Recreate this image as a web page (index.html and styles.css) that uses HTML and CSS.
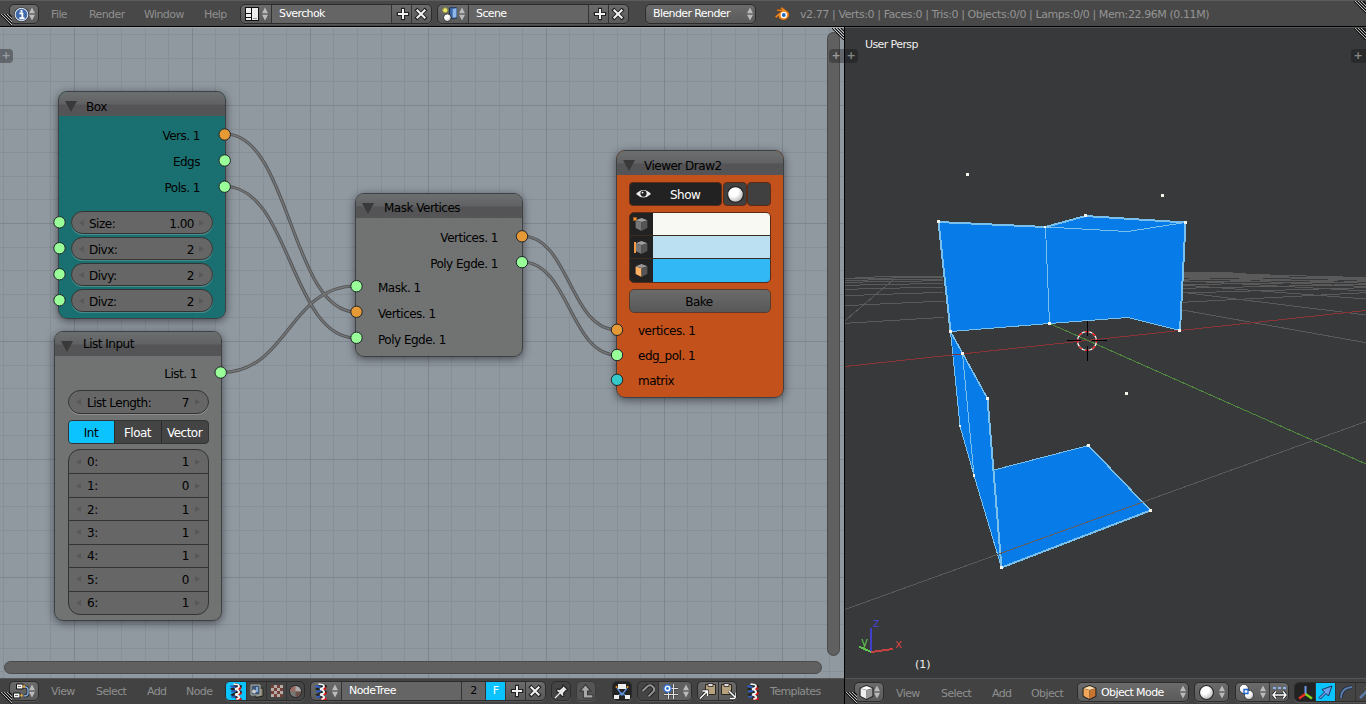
FILE: index.html
```html
<!DOCTYPE html>
<html lang="en">
<head>
<meta charset="utf-8">
<title>Sverchok</title>
<link rel="stylesheet" href="styles.css">
</head>
<body>
<svg width="0" height="0" class="defs">
  <defs>
    <radialGradient id="ball" cx=".35" cy=".3" r=".8"><stop offset=".4" stop-color="#fff"/><stop offset="1" stop-color="#aaa"/></radialGradient>
    <symbol id="i-updown" viewBox="0 0 6 14"><path d="M3 .5L6 6.200H0zM3 13.500L6 7.800H0z" fill="#bababa"/></symbol>
    <symbol id="i-plus" viewBox="0 0 14 14"><path d="M7 .8v12.400M.8 7h12.400" stroke="#222" stroke-width="4"/><path d="M7 2v10M2 7h10" stroke="#f2f2f2" stroke-width="2"/></symbol>
    <symbol id="i-x" viewBox="0 0 14 14"><path d="M1.800 1.800l10.400 10.400M12.200 1.800L1.800 12.200" stroke="#222" stroke-width="4"/><path d="M2.700 2.700l8.600 8.600M11.300 2.700l-8.600 8.600" stroke="#f2f2f2" stroke-width="2"/></symbol>
    <symbol id="i-info" viewBox="0 0 14 14"><circle cx="7" cy="7" r="6.800" fill="#1d2430"/><circle cx="7" cy="7" r="5.900" fill="#3f69ab" stroke="#dfe5ee" stroke-width="1"/><path d="M5 6h2.800v4.300M5 10.500h4.800M7 2.800v2" stroke="#fff" stroke-width="1.700" fill="none"/></symbol>
    <symbol id="i-layout" viewBox="0 0 14 14"><path d="M0 0h14v14H0z" fill="#111"/><path d="M1 1h5v5H1zM7 1h6v12H7zM1 7h5v3H1zM1 11h5v2H1z" fill="#eee"/><path d="M8 11h4v1H8z" fill="#999"/></symbol>
    <symbol id="i-scene" viewBox="0 0 14 14"><path d="M7 1l3-1 4 1v9l-4 1-3-1z" fill="#3a68a8" stroke="#16243a" stroke-width=".7"/><path d="M10 2l3.500-1v8.600L10 10z" fill="#8fb8ea"/><circle cx="5" cy="10" r="3.600" fill="url(#ball)" stroke="#222" stroke-width=".8"/><circle cx="3" cy="3" r="2.400" fill="#e7e36b" stroke="#8b8738" stroke-width=".8"/></symbol>
    <symbol id="i-helix" viewBox="0 0 12 17"><path d="M4 1.200L9 3.500 4 6l5 3-5 3 5 3.500" fill="none" stroke="#222" stroke-width="4"/><path d="M.5 3l5 1.500M1 8.500l5-.5M1.500 14l4-.5" stroke="#2c5fc0" stroke-width="2.200"/><path d="M7 12l4.500-2M6 16h5.500M8 6l3-1" stroke="#d41010" stroke-width="2.400"/><path d="M3.500 1.200q5.500 0 5.500 2T5 6q3 .5 4 2.500T5 11.500q3 .5 4 2.300T6.500 16" fill="none" stroke="#f2f2f2" stroke-width="1.800"/></symbol>
    <symbol id="i-cube" viewBox="0 0 14 14"><path d="M1 3l6-2.500L13 3v7.500L7 13.500 1 10.500z" fill="#222" stroke="#222" stroke-width="1"/><path d="M1.500 3.300L7 5v8L1.500 10.200z" fill="var(--l)"/><path d="M12.500 3.300L7 5v8l5.500-2.800z" fill="var(--r)"/><path d="M1.500 3L7 1l5.500 2L7 4.600z" fill="var(--t)"/></symbol>
    <symbol id="i-ball" viewBox="0 0 14 14"><circle cx="7" cy="7" r="6.500" fill="url(#ball)" stroke="#222" stroke-width="1"/></symbol>
    <symbol id="i-grip" viewBox="0 0 12 12"><path d="M0 0l12 12M3 0l9 9M6 0l6 6M9 0l3 3" stroke="#111" stroke-width="1.200"/><path d="M1 0l11 11M4 0l8 8M7 0l5 5" stroke="#ddd" stroke-width=".8"/></symbol>
    <symbol id="i-al" viewBox="0 0 5 6"><path d="M5 0v6L0 3z" fill="#585858"/></symbol>
    <symbol id="i-ar" viewBox="0 0 5 6"><path d="M0 0v6l5-3z" fill="#585858"/></symbol>
    <symbol id="i-clip" viewBox="0 0 11 12"><path d="M.5 1.500h10v10H.5z" fill="#b6a27f" stroke="#2a2620"/><path d="M3 .5h5v3H3z" fill="#ddd" stroke="#2a2620" stroke-width=".8"/></symbol>
  </defs>
</svg>

<div class="app">
  <header class="bar top">
    <svg class="grip bl"><use href="#i-grip"/></svg>
    <div class="group ed-switch"><svg class="ic15"><use href="#i-info"/></svg><svg class="ud"><use href="#i-updown"/></svg></div>
    <nav class="menu menu-main"><span>File</span><span>Render</span><span>Window</span><span>Help</span></nav>
    <div class="group id-block">
      <span class="cell pick"><svg class="ic14"><use href="#i-layout"/></svg><svg class="ud"><use href="#i-updown"/></svg></span><span class="cell name">Sverchok</span><span class="cell sq"><svg class="ic13"><use href="#i-plus"/></svg></span><span class="cell sq"><svg class="ic14 cross"><use href="#i-x"/></svg></span>
    </div>
    <div class="group id-block scene">
      <span class="cell pick"><svg class="ic15"><use href="#i-scene"/></svg><svg class="ud"><use href="#i-updown"/></svg></span><span class="cell name">Scene</span><span class="cell sq"><svg class="ic13"><use href="#i-plus"/></svg></span><span class="cell sq"><svg class="ic14 cross"><use href="#i-x"/></svg></span>
    </div>
    <div class="group engine"><span>Blender Render</span><svg class="ud"><use href="#i-updown"/></svg></div>
    <svg class="logo" viewBox="0 0 16 14"><path d="M1 9.500L7.500 4H3V2.500h5L6.500 1 8 .3l6 4.500c3 3-.5 8.200-4.500 8.200-3 0-5-2-5-4.200L2.500 11z" fill="#f08a24" stroke="#9a4a08" stroke-width=".5"/><circle cx="9.800" cy="8" r="3.200" fill="#fff"/><circle cx="9.800" cy="8" r="1.900" fill="#2868b8"/></svg>
    <span class="stats">v2.77 | Verts:0 | Faces:0 | Tris:0 | Objects:0/0 | Lamps:0/0 | Mem:22.96M (0.11M)</span>
    <svg class="grip tr"><use href="#i-grip"/></svg>
  </header>

  <section class="left">
    <div class="canvas">
      <svg class="wires" width="844" height="651" viewBox="0 27 844 651">
        <g class="w-out"><path id="w1" d="M225 134C290 134 291 312 356 312"/><path id="w2" d="M225 186.500C290 186.500 291 338 356 338"/><path id="w3" d="M221 372.500C288 372.500 289 286 356 286"/><path id="w4" d="M522 236C569 236 570 330 617 330"/><path id="w5" d="M522 262C569 262 570 355 617 355"/></g>
        <g class="w-in"><use href="#w1"/><use href="#w2"/><use href="#w3"/><use href="#w4"/><use href="#w5"/></g>
      </svg>

      <article class="node box">
        <h2><i></i>Box</h2>
        <div class="outs"><p>Vers. 1</p><p>Edgs</p><p>Pols. 1</p></div>
        <div class="fields">
          <div class="num"><svg><use href="#i-al"/></svg><b>Size:</b><span>1.00</span><svg><use href="#i-ar"/></svg></div>
          <div class="num"><svg><use href="#i-al"/></svg><b>Divx:</b><span>2</span><svg><use href="#i-ar"/></svg></div>
          <div class="num"><svg><use href="#i-al"/></svg><b>Divy:</b><span>2</span><svg><use href="#i-ar"/></svg></div>
          <div class="num"><svg><use href="#i-al"/></svg><b>Divz:</b><span>2</span><svg><use href="#i-ar"/></svg></div>
        </div>
      </article>

      <article class="node list">
        <h2><i></i>List Input</h2>
        <div class="outs"><p>List. 1</p></div>
        <div class="num"><svg><use href="#i-al"/></svg><b>List Length:</b><span>7</span><svg><use href="#i-ar"/></svg></div>
        <div class="tabs"><span class="on">Int</span><span>Float</span><span>Vector</span></div>
        <div class="stack">
          <div class="row"><svg><use href="#i-al"/></svg><b>0:</b><span>1</span><svg><use href="#i-ar"/></svg></div>
          <div class="row"><svg><use href="#i-al"/></svg><b>1:</b><span>0</span><svg><use href="#i-ar"/></svg></div>
          <div class="row"><svg><use href="#i-al"/></svg><b>2:</b><span>1</span><svg><use href="#i-ar"/></svg></div>
          <div class="row"><svg><use href="#i-al"/></svg><b>3:</b><span>1</span><svg><use href="#i-ar"/></svg></div>
          <div class="row"><svg><use href="#i-al"/></svg><b>4:</b><span>1</span><svg><use href="#i-ar"/></svg></div>
          <div class="row"><svg><use href="#i-al"/></svg><b>5:</b><span>0</span><svg><use href="#i-ar"/></svg></div>
          <div class="row"><svg><use href="#i-al"/></svg><b>6:</b><span>1</span><svg><use href="#i-ar"/></svg></div>
        </div>
      </article>

      <article class="node mask">
        <h2><i></i>Mask Vertices</h2>
        <div class="outs"><p>Vertices. 1</p><p>Poly Egde. 1</p></div>
        <div class="ins"><p>Mask. 1</p><p>Vertices. 1</p><p>Poly Egde. 1</p></div>
      </article>

      <article class="node viewer">
        <h2><i></i>Viewer Draw2</h2>
        <div class="show-row">
          <span class="show"><svg viewBox="0 0 16 10"><path d="M0 5Q8-3.500 16 5 8 12.500 0 5z" fill="#eee"/><circle cx="8" cy="4.500" r="3.300" fill="#222"/><circle cx="7" cy="3.500" r="1" fill="#fff"/></svg><em>Show</em></span>
          <span class="tog"><svg class="ic18"><use href="#i-ball"/></svg></span><span class="tog"></span>
        </div>
        <div class="colors">
          <div class="crow"><span><svg class="ic15 dark"><use href="#i-cube"/></svg><i class="mk vert"></i></span><u class="c1"></u></div>
          <div class="crow"><span><svg class="ic15 dark"><use href="#i-cube"/></svg><i class="mk edge"></i></span><u class="c2"></u></div>
          <div class="crow"><span><svg class="ic15 face"><use href="#i-cube"/></svg></span><u class="c3"></u></div>
        </div>
        <div class="bake">Bake</div>
        <div class="ins"><p>vertices. 1</p><p>edg_pol. 1</p><p>matrix</p></div>
      </article>

      <svg class="sockets" width="844" height="651" viewBox="0 27 844 651">
        <g fill="#e69a36"><circle cx="224.700" cy="134.500" r="5.700"/><circle cx="522" cy="236.300" r="5.700"/><circle cx="356.500" cy="311.800" r="5.700"/><circle cx="617" cy="329.800" r="5.700"/></g>
        <g fill="#99ff99"><circle cx="224.700" cy="160.500" r="5.700"/><circle cx="224.700" cy="186.700" r="5.700"/><circle cx="59.500" cy="222.300" r="5.700"/><circle cx="59.500" cy="248.200" r="5.700"/><circle cx="59.500" cy="274.200" r="5.700"/><circle cx="59.500" cy="300.200" r="5.700"/><circle cx="220.700" cy="372.500" r="5.700"/><circle cx="522" cy="262.200" r="5.700"/><circle cx="356.500" cy="286.200" r="5.700"/><circle cx="356.500" cy="337.800" r="5.700"/><circle cx="617" cy="355" r="5.700"/></g>
        <circle cx="617" cy="379.800" r="5.700" fill="#35caca"/>
      </svg>
      <div class="vscroll"></div><div class="hscroll"></div>
      <span class="tab tl">+</span><span class="tab trt">+</span>
      <svg class="grip tr"><use href="#i-grip"/></svg>
    </div>

    <footer class="bar bottom">
      <svg class="grip bl"><use href="#i-grip"/></svg>
      <div class="group ed-switch nodes"><svg width="16" height="16" viewBox="0 0 16 16"><path d="M10 4h2.500q2.500 0 2.500 3v3q0 3-4 3" fill="none" stroke="#222" stroke-width="3"/><path d="M10 4h2.500q2.500 0 2.500 3v3q0 3-4 3" fill="none" stroke="#7fa8dc" stroke-width="1.500"/><path d="M3.500 1h6.500v5H3.500zM.5 10H7v5H.5z" fill="#f2f2f2" stroke="#151515"/><path d="M5 3.500h3M2 12.500h3" stroke="#777"/><circle cx="11" cy="3.500" r="1.200" fill="#f0b030"/><circle cx="8.500" cy="12.500" r="1.200" fill="#f0b030"/></svg><svg class="ud"><use href="#i-updown"/></svg></div>
      <nav class="menu menu-node"><span>View</span><span>Select</span><span>Add</span><span>Node</span></nav>
      <div class="group dark types">
        <span class="cell sq on"><svg class="helix"><use href="#i-helix"/></svg></span>
        <span class="cell sq"><svg width="14" height="14" viewBox="0 0 14 14"><path d="M5 5l8-1v8l-7 1.500z" fill="#8d8a7b" stroke="#24241f"/><path d="M1 1h9v10H1z" fill="#405878" stroke="#b5b5a5"/><circle cx="4" cy="7.500" r="2" fill="#ccc"/><path d="M6 3h2v5H6z" fill="#85a9d8"/></svg></span>
        <span class="cell sq"><svg width="12" height="12" viewBox="0 0 12 12"><path d="M0 0h12v12H0z" fill="#b4aca5"/><path d="M0 0h3v3H0zM6 0h3v3H6zM3 3h3v3H3zM9 3h3v3H9zM0 6h3v3H0zM6 6h3v3H6zM3 9h3v3H3zM9 9h3v3H9z" fill="#75403c"/></svg></span>
        <span class="cell sq last"><svg width="13" height="13" viewBox="0 0 13 13"><circle cx="6.500" cy="6.500" r="6" fill="#777" stroke="#222"/><path d="M6.500 1A5.500 5.500 0 0 0 1 6.500h5.500z" fill="#9b6a62"/><path d="M6.500 1A5.500 5.500 0 0 1 12 6.500H6.500z" fill="#aaa"/><path d="M6.500 12A5.500 5.500 0 0 0 12 6.500H6.500z" fill="#705149"/></svg></span>
      </div>
      <div class="group tree">
        <span class="cell pick"><svg class="helix"><use href="#i-helix"/></svg><svg class="ud"><use href="#i-updown"/></svg></span><span class="cell name">NodeTree</span><span class="cell users">2</span><span class="cell sq on">F</span><span class="cell sq"><svg class="ic13"><use href="#i-plus"/></svg></span><span class="cell sq"><svg class="ic14 cross"><use href="#i-x"/></svg></span>
      </div>
      <div class="group dark one"><svg width="15" height="15" viewBox="0 0 15 15"><path d="M1 14l5-5M9 1l5 5-2 .5-2.500 3 .5 2.500-2 .5L2.500 7 3 5l2.500.5 3-2.500z" stroke="#222" stroke-width="1.200" fill="#e6e6e6"/><path d="M1 14l5.500-5.500" stroke="#eee" stroke-width="1.200"/></svg></div>
      <div class="group one dim"><svg width="15" height="15" viewBox="0 0 14 14"><path d="M6 .5L1 6.500h3V12q0 1 1 1h8v-3H8V6.500h3z" fill="#a8a8a8" stroke="#333"/></svg></div>
      <div class="group black one auto"><svg width="16" height="15" viewBox="0 0 16 15"><path d="M3 4l5 7 5-7M4 12l4-3 4 3" fill="none" stroke="#5d8ad0" stroke-width="1.400"/><path d="M4 0h8v5H4zM0 11h5v4H0zM11 11h5v4h-5z" fill="#eee"/><circle cx="2.500" cy="3" r="1" fill="#f0a020"/><circle cx="13.500" cy="3" r="1" fill="#f0a020"/></svg></div>
      <div class="group dark snap"><span class="cell sq"><svg width="14" height="14" viewBox="0 0 13 13"><path d="M1.500 6.500l4-4Q8.500 0 11 2.500t0 5l-4 4" fill="none" stroke="#222" stroke-width="3.600"/><path d="M1.500 6.500l4-4Q8.500 0 11 2.500t0 5l-4 4" fill="none" stroke="#949494" stroke-width="1.800"/></svg></span><span class="cell grid"><svg width="15" height="15" viewBox="0 0 15 15"><path d="M5.500 4v11M10.500 0v15M1 10.500h14M4 4.500h11" stroke="#333" stroke-width="2.200"/><path d="M5.500 4v11M10.500 0v15M1 10.500h14M4 4.500h11" stroke="#e4e4e4" stroke-width="1.200"/><circle cx="4.500" cy="4.500" r="3.600" fill="#fff" stroke="#2d6fd2" stroke-width="1.300"/><circle cx="4.500" cy="4.500" r="1.400" fill="#2d6fd2"/></svg><svg class="ud"><use href="#i-updown"/></svg></span></div>
      <div class="group clip"><span class="cell sq"><svg width="18" height="17" viewBox="0 0 18 17"><use href="#i-clip" x="6" y="0" width="11" height="12"/><path d="M1 15.500l7-7M3.500 8H8.500v5" fill="none" stroke="#222" stroke-width="3"/><path d="M1 15.500l7-7M3.500 8H8.500v5" fill="none" stroke="#fff" stroke-width="1.500"/></svg></span><span class="cell sq"><svg width="18" height="17" viewBox="0 0 18 17"><use href="#i-clip" x="1" y="0" width="11" height="12"/><path d="M9 8l6.500 6.500M16 9.500V15.500H10" fill="none" stroke="#222" stroke-width="3"/><path d="M9 8l6.500 6.500M16 9.500V15.500H10" fill="none" stroke="#fff" stroke-width="1.500"/></svg></span></div>
      <svg class="helix tmpl-ic"><use href="#i-helix"/></svg>
      <nav class="menu tmpl"><span>Templates</span></nav>
    </footer>
  </section>

  <section class="right">
    <div class="view3d">
      <svg width="521" height="651" viewBox="845 27 521 651" shape-rendering="crispEdges">
        <g class="floor" transform="translate(840 160) scale(.3354 .3333)">
          <path d="M15 490L310 472M15 437L313 423M15 407L308 397M15 388L308 381M15 376L308 370M15 367L308 362M15 361L308 357M15 356L308 352M45 352L225 349H308M15 482L165 354"/>
          <path d="M1020 450L1568 548M1020 397L1568 465M1020 375L1568 417M1020 362L1568 393M1020 353L1568 380M1020 347L1568 370M1020 342L1568 361M1028 338L1568 353"/>
          <path d="M1020 427L1568 398M1020 399L1568 383M1020 385L1568 373M1020 374L1568 365M1020 366L1568 359M1020 360L1568 355M1020 354L1568 352"/>
          <path d="M1028 337H1145L1250 345 1340 350 1028 353z" class="dense"/>
        </g>
        <g fill="#077ce8">
          <path d="M938.500 222L1045.500 227 1085.500 216 1185.500 222.500 1180 330.500 1128 317.500 1049.500 323.500 950.500 331.500z"/>
          <path d="M950.500 331.500L962.500 353.500 987.500 398.500 994 470 1088.500 445.500 1150.500 510.500 1001.500 567.500 974 475.500 960 426z"/>
        </g>
        <g fill="none" stroke="#79c1ec">
          <path d="M1045.500 227L1127.500 231.500 1185.500 222.500M1045.500 227L1049.500 323.500M950.500 331.500L1049.500 323.500 1128 317.500 1180 330.500M950.500 331.500L960 426 974 475.500 1001.500 567.500M962.500 353.500L974 475.500M994 470L1088.500 445.500"/>
          <path stroke-width="2" d="M950.500 331.500L938.500 222 1045.500 227 1085.500 216 1185.500 222.500 1180 330.500M987.500 398.500L1001.500 567.500 1150.500 510.500"/>
          <path stroke-width="1.500" d="M950.500 331.500L987.500 398.500M1088.500 445.500L1150.500 510.500"/>
        </g>
        <path d="M845 366.500L1366 310.500" stroke="#8a3438"/>
        <path d="M1049.500 323.500L1366 464" stroke="#4f8a3d"/>
        <path d="M845 609.500L1366 421.500" stroke="#5a5a5a"/>
        <path d="M1002 552.900L1143 502" stroke="#5f5d62"/>
        <g fill="#f4f4ec">
          <path d="M966 173h3v3h-3zM1161 194h3v3h-3zM1125 392h3v3h-3zM937 220h3v3h-3zM1044 226h2v2h-2zM1084 214h3v3h-3zM1184 221h3v3h-3zM1178 329h3v3h-3zM1048 322h3v3h-3zM949 330h3v3h-3zM961 352h3v3h-3zM986 397h3v3h-3zM959 425h2v2h-2zM973 474h2v3h-2zM1087 444h3v3h-3zM1149 509h3v3h-3zM1000 566h3v3h-3z"/>
        </g>
        <g shape-rendering="geometricPrecision" fill="none" stroke-width="1.200">
          <circle cx="1087" cy="341" r="9.500" stroke="#fff"/>
          <circle cx="1087" cy="341" r="9.500" stroke="#f00" stroke-dasharray="3.730 3.730" stroke-dashoffset="2"/>
        </g>
        <path d="M1067 340.500h14M1092 340.500h15M1087.500 321v15M1087.500 346v15" stroke="#000"/>
        <g stroke-width="2" fill="none"><path d="M871 652V628" stroke="#4040c8"/><path d="M871 652L893 649" stroke="#c84040"/><path d="M871 652L859 646.500" stroke="#60c050"/></g>
      </svg>
      <span class="persp">User Persp</span><span class="frame">(1)</span>
      <span class="ax z">z</span><span class="ax x">x</span><span class="ax y">y</span>
      <span class="tab tl">+</span><span class="tab trt">+</span>
      <svg class="grip tr"><use href="#i-grip"/></svg>
    </div>
    <footer class="bar bottom v3d">
      <svg class="grip bl"><use href="#i-grip"/></svg>
      <div class="group ed-switch"><svg class="ic15 white"><use href="#i-cube"/></svg><svg class="ud"><use href="#i-updown"/></svg></div>
      <nav class="menu menu-view"><span>View</span><span>Select</span><span>Add</span><span>Object</span></nav>
      <div class="group mode"><svg class="ic15 orange"><use href="#i-cube"/></svg><span>Object Mode</span><svg class="ud"><use href="#i-updown"/></svg></div>
      <div class="group shade"><svg class="ic15"><use href="#i-ball"/></svg><svg class="ud"><use href="#i-updown"/></svg></div>
      <div class="group pivot"><span class="cell pv"><svg width="15" height="16" viewBox="0 0 15 16"><use href="#i-ball" width="10" height="10"/><use href="#i-ball" x="5" y="6" width="10" height="10"/><path d="M5 5.500h4v4H5z" fill="#fff" stroke="#1f63d0" stroke-width="1.300"/></svg><svg class="ud"><use href="#i-updown"/></svg></span><span class="cell sq"><svg width="15" height="15" viewBox="0 0 15 15"><path d="M1 2h3v2H1zM6 2h3v2H6zM11 2h3v2h-3z" fill="#8ab2ea"/><path d="M1 10h13M4 6.500L1 10l3 3.500M11 6.500L14 10l-3 3.500" stroke="#222" stroke-width="3" fill="none"/><path d="M1 10h13M4 6.500L1 10l3 3.500M11 6.500L14 10l-3 3.500" stroke="#fff" stroke-width="1.400" fill="none"/></svg></span></div>
      <div class="group dark gizmo"><span class="cell sq blk"><svg width="15" height="15" viewBox="0 0 15 15"><path d="M7.500 9V1" stroke="#6a9ae6" stroke-width="2"/><path d="M7.500 9L1 13.500" stroke="#f03020" stroke-width="2.200"/><path d="M7.500 9l6.500 4.500" stroke="#80d820" stroke-width="2.200"/></svg></span><span class="cell sq on"><svg width="15" height="15" viewBox="0 0 15 15"><path d="M1 12.500L6.500 7 4 4.500 14 1l-3.500 10L8 8.500 2.500 14z" fill="#6b9fe8" stroke="#15335e"/></svg></span><span class="cell sq"><svg width="14" height="14" viewBox="0 0 14 14"><path d="M2 13Q2 3 13 2" fill="none" stroke="#1c2a3e" stroke-width="3.500"/><path d="M2 13Q2 3 13 2" fill="none" stroke="#5a7ba8" stroke-width="1.800"/></svg></span><span class="cell sq"><svg width="14" height="14" viewBox="0 0 14 14"><path d="M1 13L9 5" stroke="#5a7ba8" stroke-width="2.500"/><path d="M6 2h6v6z" fill="#5a7ba8"/></svg></span></div>
    </footer>
  </section>
</div>
</body>
</html>
```
FILE: styles.css
```css
* { box-sizing: border-box; }
body { margin: 0; background: #000; font: 11px/20px "DejaVu Sans", sans-serif; letter-spacing: -.6px; color: #fff; }
.defs { position: absolute; }
svg { display: block; flex: none; }
h2, p { margin: 0; }
b, em { font-weight: normal; font-style: normal; }

.app { width: 1366px; height: 704px; overflow: hidden; display: grid; grid-template-columns: 844px 521px; grid-template-rows: 26px 677px; gap: 1px; }
.bar { position: relative; display: flex; align-items: flex-start; background: #484848; overflow: hidden; white-space: nowrap; }
.top { grid-column: 1 / 3; padding: 3px 0 0 9px; border-top: 1px solid #5c5c5c; }
.bottom { height: 26px; padding: 2px 0 0 9px; background: #424242; border-top: 1px solid #555; }
.v3d { padding-top: 3px; }

.group { flex: none; display: flex; height: 20px; border: 1px solid #2c2c2c; border-radius: 5px; background: linear-gradient(#6b6b6b, #5a5a5a); overflow: hidden; align-items: center; line-height: 20px; box-shadow: 0 1px 0 #565656; }
.group.dark { background: #444; }
.group.black { background: #222; }
.group.dim { border-color: #3a3a3a; background: #555; }
.cell { flex: none; height: 18px; display: flex; align-items: center; }
.cell + .cell { border-left: 1px solid #333; }
.sq { width: 20px; justify-content: center; }
.on { background: #0bc4ff; }
.blk { background: #222; }
.ud { width: 6px; height: 14px; }
.ic14 { width: 14px; height: 14px; }
.cross { margin-right: 1px; }
.last svg { margin-right: 2px; }
.ic13 { width: 14px; height: 14px; margin-left: 2px; }
.ic15 { width: 15px; height: 15px; }
.ic18 { width: 17px; height: 17px; }
.helix { width: 12px; height: 17px; }

.ed-switch { width: 30px; justify-content: space-between; padding: 0 3px 0 4px; }
.nodes { padding-left: 3px; }
.menu { flex: none; display: flex; color: #8f8f8f; line-height: 22px; }
.menu-main { margin-left: 12px; line-height: 21px; }
.menu-main span:nth-child(1) { width: 38px; }
.menu-main span:nth-child(2) { width: 55px; }
.menu-main span:nth-child(3) { width: 60px; }
.menu-main span:nth-child(4) { width: 36px; }
.id-block { width: 192px; }
.pick { width: 30px; justify-content: space-between; padding: 0 3px 0 4px; }
.name { width: 120px; padding-left: 7px; background: #656565; }
.scene { margin-left: 5px; }
.engine { margin-left: 16px; width: 111px; justify-content: space-between; padding: 0 2px 0 7px; }
.logo { width: 16px; height: 14px; margin: 3px 0 0 18px; }
.stats { margin-left: 10px; color: #949494; line-height: 21px; letter-spacing: -.415px; }
.grip { position: absolute; width: 12px; height: 12px; }
.grip.bl { left: 0; bottom: 0; }
.grip.tr { right: 0; top: 0; }

.left, .right { min-width: 0; display: flex; flex-direction: column; }
.canvas { position: relative; height: 651px; overflow: hidden; background-color: #9098a0; border-top: 1px solid #a0a8ae;
  background-size: 118px 118px;
  background-image:
    linear-gradient(90deg, #7d858d 1px, transparent 1px),
    linear-gradient(#7d858d 1px, transparent 1px),
    linear-gradient(90deg, transparent 23px, #868e96 23px 24px, transparent 24px 47px, #868e96 47px 48px, transparent 48px 71px, #868e96 71px 72px, transparent 72px 94px, #868e96 94px 95px, transparent 95px),
    linear-gradient(transparent 24px, #868e96 24px 25px, transparent 25px 47px, #868e96 47px 48px, transparent 48px 71px, #868e96 71px 72px, transparent 72px 94px, #868e96 94px 95px, transparent 95px);
  background-position: 74px 77px; }
.wires, .sockets { position: absolute; left: 0; top: -1px; pointer-events: none; }
.w-out { fill: none; stroke: #505356; stroke-width: 3.2; }
.w-in { fill: none; stroke: #777; stroke-width: 1.4; }
.sockets circle { stroke: #20242a; stroke-width: 1; }

.node { position: absolute; width: 168px; border: 1px solid #3d4144; border-radius: 9px; font-size: 12px; letter-spacing: -.5px; color: #000; overflow: hidden; box-shadow: 0 2px 8px rgba(0, 0, 0, .5); background: rgba(110, 113, 112, .94); padding: 24px 13px 0; white-space: nowrap; }
.node h2 { position: relative; margin: -24px -13px 0; height: 24px; padding-left: 27px; font-size: 12px; font-weight: normal; line-height: 30px; background: linear-gradient(#6c6f70 0, #606162 50%, #545456 55%, #555557); }
.node h2 i { position: absolute; left: 6px; top: 9px; border: 6px solid transparent; border-top: 11px solid #393939; border-bottom: 0; }
.box { left: 58px; top: 63px; height: 228px; background: rgba(22, 110, 112, .97); }
.list { left: 54px; top: 303px; height: 290px; padding-right: 12px; }
.list h2 { line-height: 25px; padding-left: 28px; margin-right: -12px; }
.mask { left: 355px; top: 165px; height: 164px; }
.viewer { left: 616px; top: 122px; height: 248px; background: rgba(196, 80, 26, .98); padding: 24px 12px 0; }
.viewer h2 { margin-left: -12px; margin-right: -12px; }
.mask h2 { line-height: 29px; }
.mask h2 { padding-left: 28px; }
.outs { text-align: right; padding: 6px 12px 0 0; }
.outs p, .ins p { line-height: 28px; height: 26px; }
.mask .outs { padding-right: 11px; }
.mask .ins { padding-left: 9px; margin-top: -2px; }
.fields { display: flex; flex-direction: column; gap: 3px; margin: 11px -1px 0 -1px; }
.num, .row { display: flex; align-items: center; padding: 0 8px 0 7px; }
.num { height: 23px; border: 1px solid #333; border-radius: 12px; background: #666; box-shadow: 0 1px 0 rgba(255, 255, 255, .2); }
.num svg, .row svg { width: 5px; height: 6px; }
.num b, .row b { margin-left: 5px; padding-top: 2px; }
.num span, .row span { margin: 0 5px 0 auto; padding-top: 2px; }
.list .outs { padding: 5px 12px 3px 0; }
.list .outs p { line-height: 27px; }
.list .num { height: 24px; }
.list .num b, .row b { margin-left: 6px; }
.list .num span, .row span { margin-right: 6px; }
.tabs { display: flex; height: 24px; margin-top: 6px; border: 1px solid #333; border-radius: 4px; overflow: hidden; background: #444; color: #fff; line-height: 25px; text-align: center; }
.tabs span { width: 47px; border-left: 1px solid #2a2a2a; padding-right: 1px; }
.tabs .on { width: 45px; border: 0; color: #000; }
.stack { display: grid; grid-template-rows: repeat(7, 1fr); height: 166px; margin-top: 5px; border: 1px solid #333; border-radius: 12px; background: #666; }
.row b, .row span { padding-top: 1px; }
.row + .row { border-top: 1px solid #333; }
.show-row { display: flex; margin-top: 7px; height: 24px; }
.show { width: 93px; margin-right: 1px; border-radius: 4px; border: 1px solid #5c2b16; background: #222; color: #fff; display: flex; align-items: center; padding-left: 6px; }
.show svg { width: 15px; height: 10px; }
.show em { margin-left: 19px; padding-top: 2px; }
.tog { width: 24px; border: 1px solid #5c2b16; border-radius: 4px; background: #404040; display: flex; align-items: center; justify-content: center; }
.colors { margin-top: 6px; width: 142px; height: 71px; border: 1px solid #5c2b16; border-radius: 5px; overflow: hidden; display: grid; grid-template-rows: 22px 23px 24px; background: #222; }
.crow { display: flex; }
.crow + .crow { border-top: 1px solid #3a2b20; }
.crow span { position: relative; width: 23px; display: flex; align-items: center; justify-content: center; }
.crow u { flex: 1; }
.c1 { background: #f9f9f4; } .c2 { background: #bbe0f2; } .c3 { background: #31b8f5; }
.mk { position: absolute; background: #f29a45; }
.vert { left: 3px; top: 4px; width: 4px; height: 4px; border: 1px solid #a55a18; }
.edge { left: 4px; top: 6px; width: 2px; height: 11px; }
.dark { --l: #777; --r: #555; --t: #a0a0a0; }
.face { --l: #ffb266; --r: #555; --t: #999; }
.white { --l: #eee; --r: #999; --t: #fff; }
.orange { --l: #f2a65a; --r: #c87530; --t: #ffdda8; }
.bake { margin-top: 6px; width: 142px; height: 24px; padding-right: 2px; border: 1px solid #5c3b2a; border-radius: 5px; background: linear-gradient(#6b6b6b, #585858); text-align: center; line-height: 24px; }
.viewer .ins { padding: 5px 0 0 9px; }
.viewer .ins p { height: 25px; line-height: 26px; }
.vscroll, .hscroll { position: absolute; border: 1px solid #4a4a4a; border-radius: 7px; background: #606060; }
.vscroll { left: 827px; top: 4px; width: 13px; height: 624px; }
.hscroll { left: 4px; top: 633px; width: 818px; height: 13px; }
.tab { position: absolute; top: 21px; width: 13px; height: 14px; background: rgba(30, 30, 32, .4); color: #9a9da0; font: bold 11px/13px "DejaVu Sans", sans-serif; letter-spacing: 0; text-align: center; }
.tab.tl { left: 0; padding-right: 1px; border-radius: 0 4px 4px 0; }
.tab.trt { right: 0; width: 15px; padding-right: 1px; border-radius: 4px 0 0 4px; }

.menu-node { margin-left: 12px; }
.menu-node span:nth-child(1) { width: 45px; }
.menu-node span:nth-child(2) { width: 51px; }
.menu-node span:nth-child(3) { width: 39px; }
.menu-node span:nth-child(4) { width: 39px; }
.types { width: 80px; }
.tree { width: 236px; margin-left: 5px; }
.users { width: 24px; justify-content: center; color: #000; background: #656565; }
.one { width: 20px; justify-content: center; margin-left: 5px; }
.auto { margin-left: 16px; }
.snap { width: 55px; margin-left: 5px; }
.grid { width: 34px; background: #606060; justify-content: space-between; padding: 0 3px 0 4px; }
.clip { width: 40px; margin-left: 5px; }
.tmpl-ic { margin: 2px 11px 0 10px; }

.view3d { position: relative; height: 651px; background: #38393a; border-top: 1px solid #55585a; }
.view3d > svg:first-child { margin-top: -1px; }
.view3d .tab { background: #292a2b; color: #888; }
.floor { stroke: #5a5a5a; fill: none; }
.floor path { vector-effect: non-scaling-stroke; }
.floor .dense { fill: #5a5a5a; }
.persp, .frame, .ax { position: absolute; color: #eee; }
.persp { left: 20px; top: 7px; }
.frame { left: 70px; top: 627px; letter-spacing: 0; }
.ax { font-size: 12px; line-height: 12px; }
.ax.z { left: 28px; top: 589px; color: #4343d0; }
.ax.x { left: 50px; top: 610px; color: #c84444; }
.ax.y { left: 16px; top: 608px; color: #60c050; }
.menu-view { margin-left: 12px; }
.menu-view, .v3d .group { line-height: 23px; }
.menu-view span:nth-child(1) { width: 45px; }
.menu-view span:nth-child(2) { width: 51px; }
.menu-view span:nth-child(3) { width: 39px; }
.menu-view span:nth-child(4) { width: 46px; }
.mode { width: 112px; padding: 0 2px 0 4px; }
.mode span { margin: 0 auto 0 4px; }
.shade { width: 35px; margin-left: 5px; justify-content: space-between; padding: 0 3px 0 4px; }
.pivot { width: 54px; margin-left: 6px; }
.pv { width: 33px; justify-content: space-between; padding: 0 3px; }
.gizmo { width: 82px; margin-left: 5px; border-radius: 5px 0 0 5px; }
```
